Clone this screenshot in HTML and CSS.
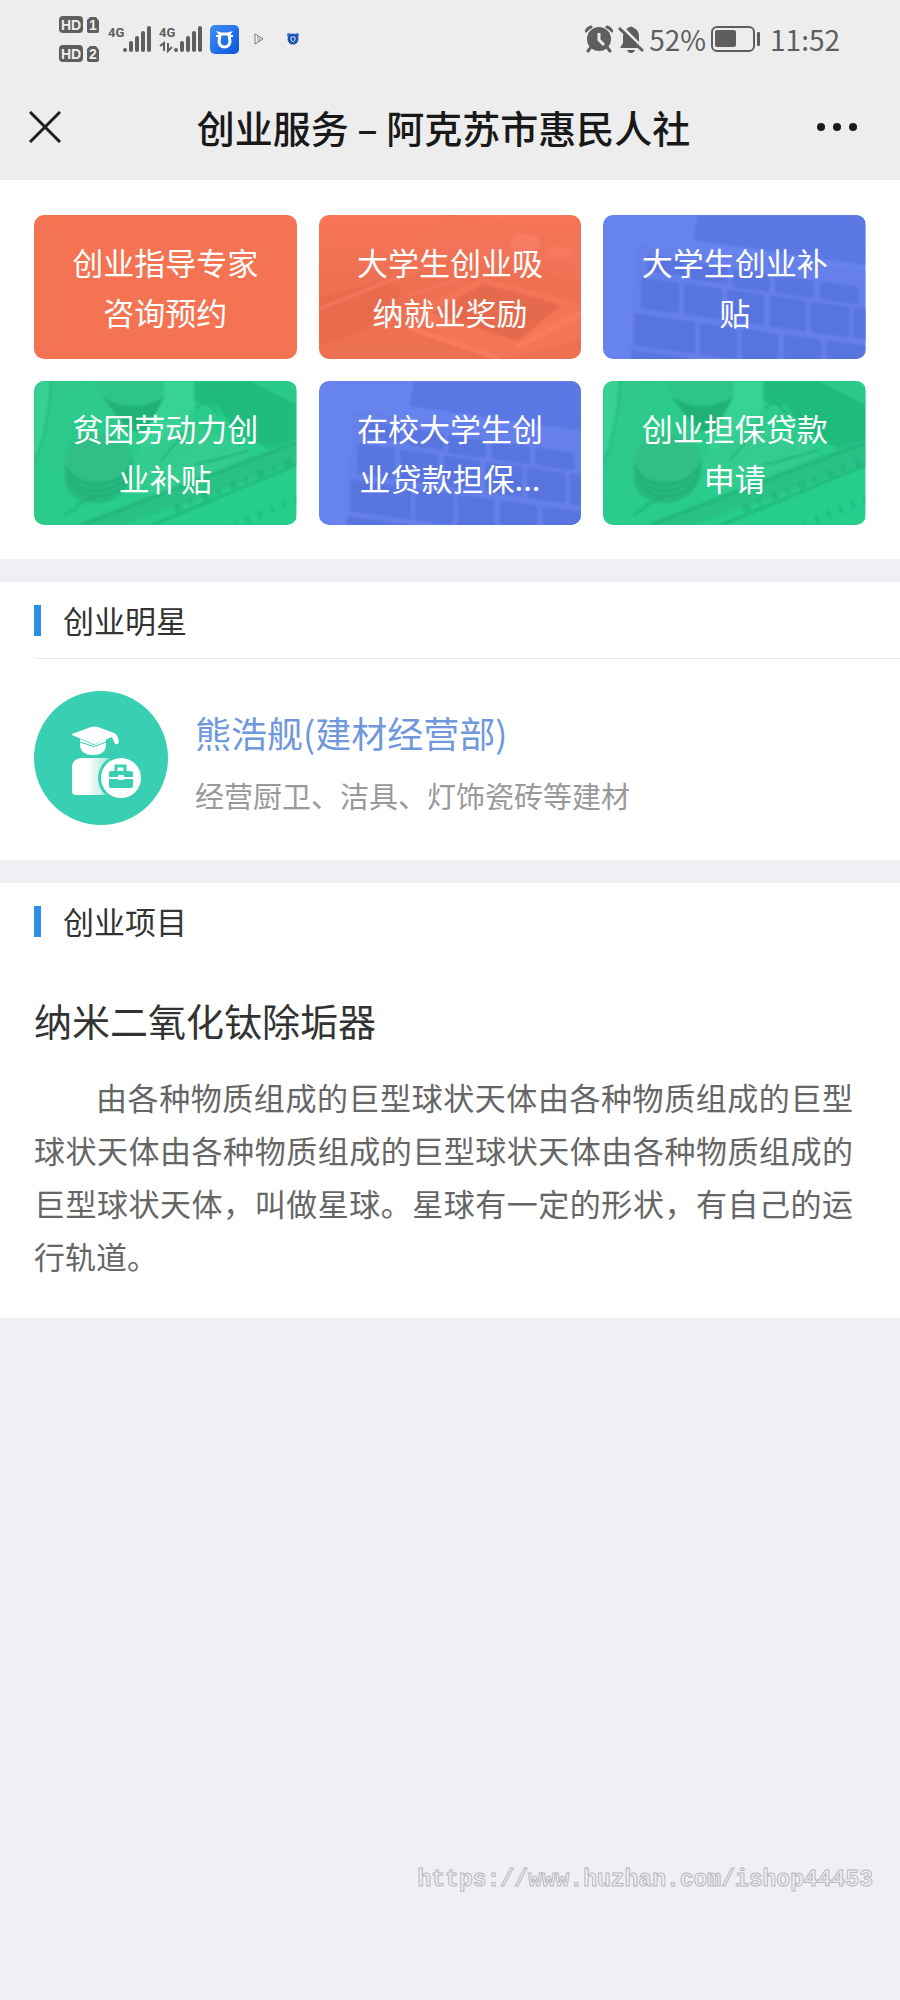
FILE: index.html
```html
<!DOCTYPE html>
<html lang="zh-CN">
<head>
<meta charset="utf-8">
<meta name="viewport" content="width=device-width, initial-scale=1">
<title>创业服务 – 阿克苏市惠民人社</title>
<link rel="stylesheet" href="styles.css">
</head>
<body>
<svg class="defs" aria-hidden="true">
  <defs>
    <linearGradient id="greenBase" x1="0" y1="0" x2="1" y2="1">
      <stop offset="0" stop-color="#2fc98a"/><stop offset="1" stop-color="#25cf8c"/>
    </linearGradient>
    <linearGradient id="orangeBase" x1="0" y1="0" x2="0" y2="1">
      <stop offset="0" stop-color="#f97557"/><stop offset="0.4" stop-color="#ee7053"/><stop offset="1" stop-color="#ec7052"/>
    </linearGradient>
    <linearGradient id="bodyShade" x1="0" y1="0" x2="1" y2="0">
      <stop offset="0.4" stop-color="#fff"/><stop offset="1" stop-color="#a3e8d8"/>
    </linearGradient>
    <linearGradient id="appBlue" x1="0" y1="0" x2="1" y2="1">
      <stop offset="0" stop-color="#3f8df5"/><stop offset="1" stop-color="#0a57dc"/>
    </linearGradient>
    <filter id="soft"><feGaussianBlur stdDeviation="1.2"/></filter>
  </defs>
  <symbol id="art-money" viewBox="0 0 262 144" preserveAspectRatio="none">
    <rect width="262" height="144" fill="url(#greenBase)"/>
    <g filter="url(#soft)" opacity="0.75">
      <path d="M0 0H17Q14 50 0 82Z" fill="#3ad395"/>
      <path d="M17 0Q14 50 0 82" fill="none" stroke="#25b97c" stroke-width="2"/>
      <path d="M131 0H160V28L130 66L108 76V30Z" fill="#3bd598"/>
      <path d="M160 0H262V58L235 68L200 50L184 26L160 20Z" fill="#1db679"/>
      <path d="M215 0H262V24Z" fill="#2cc88a"/>
      <path d="M63 0H130V18Q98 34 70 18Z" fill="#2fc486"/>
      <path d="M68 16Q98 34 130 16L112 50H96L84 36Z" fill="#1fa970"/>
      <path d="M98 78L150 40L205 62L214 74L120 118Z" fill="#38cb90"/>
      <path d="M31 82V104Q42 124 66 122Q92 118 98 92V76Z" fill="#27b27a"/>
      <ellipse cx="64" cy="77" rx="33" ry="24" fill="#35bb84"/>
      <g fill="none" stroke="#1fa36d" stroke-width="1.5">
        <path d="M31 86Q42 106 66 103Q90 100 97 82M33 93Q44 112 67 109Q90 106 97 90M36 101Q46 118 67 115Q88 112 96 97"/>
        <path d="M162 28Q170 14 184 34M126 80L150 52L160 44M160 84L214 70"/>
      </g>
      <path d="M40 144L262 58V82L90 144Z" fill="#29be83"/>
      <g fill="none" stroke="#1ea972" stroke-width="2">
        <path d="M48 144L262 62M118 144L262 84M42 124L62 116M30 134L44 126"/>
        <path d="M140 128L262 78" stroke-width="8" stroke-dasharray="7 9 3 11" opacity="0.6"/>
        <path d="M200 144L262 118" stroke-width="8" stroke-dasharray="3 10" opacity="0.6"/>
      </g>
    </g>
  </symbol>
  <symbol id="art-keys" viewBox="0 0 262 144" preserveAspectRatio="none">
    <rect width="262" height="144" fill="#6783ed"/>
    <g filter="url(#soft)">
      <path d="M95 0H262V50L90 25Z" fill="#5a77e4"/>
      <path d="M34 30L262 54V144H26Z" fill="#6680ea"/>
      <g transform="skewY(8)" fill="#5874df">
        <rect x="44" y="34" width="38" height="16" rx="3"/><rect x="88" y="35" width="36" height="17" rx="3"/><rect x="129" y="36" width="37" height="18" rx="3"/><rect x="172" y="36" width="38" height="18" rx="3"/><rect x="216" y="36" width="39" height="18" rx="3"/>
        <rect x="38" y="57" width="38" height="31" rx="3"/><rect x="81" y="57" width="38" height="31" rx="3"/><rect x="124" y="57" width="37" height="31" rx="3"/><rect x="166" y="57" width="37" height="31" rx="3"/><rect x="207" y="57" width="39" height="31" rx="3"/><rect x="250" y="57" width="20" height="31" rx="3"/>
        <rect x="31" y="94" width="61" height="32" rx="3"/><rect x="96" y="94" width="38" height="32" rx="3"/><rect x="138" y="94" width="37" height="32" rx="3"/><rect x="180" y="94" width="38" height="32" rx="3"/><rect x="223" y="94" width="40" height="32" rx="3"/>
        <rect x="28" y="131" width="62" height="20" rx="3"/>
      </g>
    </g>
  </symbol>
  <symbol id="art-desk" viewBox="0 0 262 144" preserveAspectRatio="none">
    <rect width="262" height="144" fill="url(#orangeBase)"/>
    <g filter="url(#soft)" opacity="0.75">
      <path d="M0 82L60 66L84 72L74 92L40 118L0 130Z" fill="#e66a4e"/>
      <path d="M124 0L262 22V70L180 40L100 30Z" fill="#f27558"/>
      <ellipse cx="206" cy="28" rx="15" ry="9" fill="#f9806a"/><ellipse cx="240" cy="38" rx="14" ry="7" fill="#f77b60"/>
      <path d="M92 98L162 62L262 88V124L190 144L128 128Z" fill="#f5775a"/>
      <path d="M112 98L164 69L242 90L198 126Z" fill="#e2674b"/>
      <path d="M0 94L120 46M90 80L148 62" fill="none" stroke="#f67a5e" stroke-width="3"/>
      <path d="M88 112L180 144M196 132L262 98" fill="none" stroke="#ff8062" stroke-width="5"/>
    </g>
  </symbol>
</svg>

<header class="top">
  <div class="status">
    <div class="status-group">
      <svg class="hd" width="41" height="46" viewBox="0 0 41 46" role="img" aria-label="HD 1 HD 2">
        <g fill="#5e5e5e"><rect x="0" y="0" width="24" height="17" rx="4"/><rect x="0" y="29" width="24" height="17" rx="4"/>
        <path d="M31 1h6l3 4v10a2 2 0 0 1-2 2h-8a2 2 0 0 1-2-2V4zM31 30h6l3 4v10a2 2 0 0 1-2 2h-8a2 2 0 0 1-2-2V33z"/></g>
        <g class="hd-text"><text x="12" y="14">HD</text><text x="12" y="43">HD</text><text x="34" y="14">1</text><text x="34" y="43">2</text></g>
      </svg>
      <svg width="43" height="28" viewBox="0 0 43 28" role="img" aria-label="4G">
        <text class="net" x="0" y="12">4G</text>
        <path d="M17 25v0M23 25v-7M29 25V13M35 25V8M41 25V3" stroke="#5e5e5e" stroke-width="4" stroke-linecap="round"/>
      </svg>
      <svg width="43" height="28" viewBox="0 0 43 28" role="img" aria-label="4G">
        <text class="net" x="0" y="12">4G</text>
        <path d="M17 25v0M23 25v-7M29 25V13M35 25V8M41 25V3" stroke="#5e5e5e" stroke-width="4" stroke-linecap="round"/>
        <path d="M5 26V18L1 21M9 18v8l4-4" fill="none" stroke="#5e5e5e" stroke-width="2"/>
      </svg>
      <svg width="29" height="29" viewBox="0 0 29 29" aria-hidden="true">
        <rect width="29" height="29" rx="5" fill="url(#appBlue)"/>
        <path d="M6 6l3 4 3-1-2-2M23 6l-3 4-3-1 2-2" fill="#fff"/>
        <path d="M10 9h9l1 8q-1 5-5.500 5T9 17Z" fill="none" stroke="#fff" stroke-width="3" stroke-linejoin="round"/>
        <path d="M6 11h4M19 11h4" stroke="#fff" stroke-width="2"/>
      </svg>
      <svg class="play" width="10" height="12" viewBox="0 0 10 12" aria-hidden="true">
        <path d="M1 1l8 5-8 5z" fill="#fff" stroke="#777" stroke-width="1"/><path d="M4 3v6M6 5v3" stroke="#888"/>
      </svg>
      <svg class="bear" width="12" height="12" viewBox="0 0 12 12" aria-hidden="true">
        <circle cx="2" cy="2" r="2" fill="#3c75c9"/><circle cx="10" cy="2" r="2" fill="#3c75c9"/><circle cx="6" cy="6" r="5.500" fill="#1d55b4"/>
        <path d="M4 4h4v3L6 9 4 7z" fill="none" stroke="#cfe0f8"/>
      </svg>
    </div>
    <div class="status-group status-right">
      <svg width="28" height="28" viewBox="0 0 28 28" aria-hidden="true">
        <circle cx="14" cy="14" r="12" fill="#5e5e5e"/>
        <path d="M1 6Q3 3 6 2M22 2Q25 3 27 6M6 22l-3 4M22 22l3 4" stroke="#5e5e5e" stroke-width="3" stroke-linecap="round" fill="none"/>
        <path d="M6 1L1 7M22 1L27 7" stroke="#ececec" stroke-width="2" transform="translate(0 3)" opacity="0"/>
        <path d="M14 8v7l5 5" fill="none" stroke="#ececec" stroke-width="3"/>
      </svg>
      <svg width="26" height="28" viewBox="0 0 26 28" aria-hidden="true">
        <path d="M2 23L5 18V12Q5 4 10 3Q13 0 16 3Q21 5 21 12V18L24 23ZM9 25h8q-1 3-4 3t-4-3z" fill="#5e5e5e"/>
        <path d="M2 0L26 24" stroke="#ececec" stroke-width="3"/><path d="M1 3L25 26" stroke="#5e5e5e" stroke-width="3"/>
      </svg>
      <span class="level">52%</span>
      <svg width="49" height="28" viewBox="0 0 49 28" role="img" aria-label="battery">
        <rect x="1" y="2" width="42" height="24" rx="5" fill="none" stroke="#5e5e5e" stroke-width="2"/>
        <rect x="4" y="5" width="21" height="17" rx="2" fill="#5e5e5e"/><rect x="46" y="7" width="3" height="14" rx="1" fill="#5e5e5e"/>
      </svg>
      <time class="clock">11:52</time>
    </div>
  </div>
  <nav class="bar">
    <button class="icon-button" type="button" aria-label="关闭">
      <svg width="32" height="32" viewBox="0 0 32 32"><path d="M1 1L31 31M31 1L1 31" stroke="#1f1f1f" stroke-width="3"/></svg>
    </button>
    <h1 class="bar-title">创业服务 – 阿克苏市惠民人社</h1>
    <button class="icon-button" type="button" aria-label="更多">
      <svg width="42" height="10" viewBox="0 0 42 10"><g fill="#191919"><circle cx="5" cy="5" r="4"/><circle cx="21" cy="5" r="4"/><circle cx="37" cy="5" r="4"/></g></svg>
    </button>
  </nav>
</header>

<main>
  <section class="panel services">
    <a class="card plain" href="#"><span class="card-label">创业指导专家咨询预约</span></a>
    <a class="card" href="#"><svg class="card-art" aria-hidden="true"><use href="#art-desk"/></svg><span class="card-label">大学生创业吸纳就业奖励</span></a>
    <a class="card" href="#"><svg class="card-art" aria-hidden="true"><use href="#art-keys"/></svg><span class="card-label">大学生创业补贴</span></a>
    <a class="card" href="#"><svg class="card-art" aria-hidden="true"><use href="#art-money"/></svg><span class="card-label">贫困劳动力创业补贴</span></a>
    <a class="card" href="#"><svg class="card-art" aria-hidden="true"><use href="#art-keys"/></svg><span class="card-label">在校大学生创业贷款担保...</span></a>
    <a class="card" href="#"><svg class="card-art" aria-hidden="true"><use href="#art-money"/></svg><span class="card-label">创业担保贷款申请</span></a>
  </section>

  <section class="panel">
    <h2 class="heading lined">创业明星</h2>
    <a class="star" href="#">
      <svg width="135" height="135" viewBox="0 0 135 135" aria-hidden="true">
        <circle cx="67" cy="67" r="67" fill="#38cfb3"/>
        <path d="M46 48L60 54 72 48V55Q71 64 59 64T46 55Z" fill="#fff"/>
        <path d="M38 43L57 36Q60 35 64 36L80 42Q83 43 84 47L85 51Q84 54 81 53L78 46L63 52Q60 54 57 52L38 44Z" fill="#fff"/>
        <path d="M46 51L58 55Q60 56 62 55L72 51" fill="none" stroke="#38cfb3" stroke-width="1"/>
        <path d="M46 67H76L71 104H42Q38 104 38 100V76Q38 69 46 67Z" fill="url(#bodyShade)"/>
        <circle cx="87" cy="87" r="23" fill="#38cfb3"/><circle cx="87" cy="87" r="20" fill="#fff"/>
        <path d="M82 81V75H91V81" fill="none" stroke="#38cfb3" stroke-width="3"/>
        <rect x="75" y="80" width="24" height="17" rx="2" fill="#38cfb3"/>
        <path d="M75 87H99" stroke="#fff" stroke-width="2"/><rect x="84" y="84" width="6" height="5" rx="1" fill="#fff"/>
      </svg>
      <span class="star-text"><span class="star-name">熊浩舰(建材经营部)</span><span class="star-note">经营厨卫、洁具、灯饰瓷砖等建材</span></span>
    </a>
  </section>

  <section class="panel">
    <h2 class="heading">创业项目</h2>
    <article class="project">
      <h3 class="project-title">纳米二氧化钛除垢器</h3>
      <p class="project-text">由各种物质组成的巨型球状天体由各种物质组成的巨型球状天体由各种物质组成的巨型球状天体由各种物质组成的巨型球状天体，叫做星球。星球有一定的形状，有自己的运行轨道。</p>
    </article>
  </section>
</main>
<div class="watermark">https://www.huzhan.com/ishop44453</div>
</body>
</html>
```

FILE: styles.css
```css
* { box-sizing: border-box; }

body {
  margin: 0;
  min-height: 100vh;
  position: relative;
  background: #efeff4;
  color: #333;
  font-family: "Noto Sans CJK SC", sans-serif;
}

h1, h2, h3, p { margin: 0; font-weight: 400; }
a { color: inherit; text-decoration: none; }
svg { display: block; flex: none; }
.defs { position: absolute; width: 0; height: 0; }

.top { background: #ededed; }
.status {
  display: flex;
  justify-content: space-between;
  align-items: center;
  height: 78px;
  padding: 0 60px 0 59px;
  color: #5e5e5e;
}
.status-group { display: flex; align-items: center; gap: 8px; }
.hd-text {
  fill: #ededed;
  font: 700 14px "Liberation Sans", sans-serif;
  text-anchor: middle;
}
.net { fill: #5e5e5e; font: 700 13px Roboto, sans-serif; }
.play { margin-left: 7px; }
.bear { margin-left: 15px; }
.level, .clock { font-size: 28px; line-height: 40px; }
.status-right { gap: 5px; }
.clock { margin-left: 5px; }

.bar {
  display: flex;
  justify-content: space-between;
  align-items: center;
  height: 102px;
  padding: 0 42px 4px 29px;
}
.icon-button {
  display: flex;
  min-width: 42px;
  padding: 0;
  border: 0;
  background: none;
}
.bar-title {
  color: #191919;
  font-size: 38px;
  font-weight: 500;
  line-height: 56px;
}

.panel { background: #fff; }
.panel + .panel { margin-top: 23px; }

.services {
  display: grid;
  grid-template-columns: repeat(3, 1fr);
  gap: 22px;
  padding: 35px 34px 34px;
}
.card {
  position: relative;
  display: flex;
  align-items: center;
  justify-content: center;
  min-height: 144px;
  padding: 20px 34px;
  overflow: hidden;
  border-radius: 10px;
  color: #fff;
  font-size: 31px;
  line-height: 50px;
  text-align: center;
}
.plain { background: #f47352; }
.card-art { position: absolute; inset: 0; width: 100%; height: 100%; }
.card-label { position: relative; }

.heading {
  display: flex;
  align-items: center;
  gap: 22px;
  margin-left: 34px;
  padding: 15px 0;
  font-size: 31px;
  line-height: 46px;
}
.heading::before { content: ""; width: 7px; height: 31px; background: #2b8fe3; }
.lined { border-bottom: 1px solid #e8e8e8; }

.star { display: flex; align-items: center; gap: 26px; padding: 32px 34px 34px; }
.star-text { display: flex; flex-direction: column; gap: 12px; padding-top: 6px; }
.star-name { color: #7098dc; font-size: 36px; line-height: 54px; }
.star-note { color: #999; font-size: 29px; line-height: 48px; }

.project { padding: 33px 34px 36px; }
.project-title { margin-bottom: 22px; font-size: 38px; line-height: 56px; }
.project-text {
  padding-right: 13px;
  color: #666;
  font-size: 31px;
  line-height: 53px;
  text-align: justify;
  text-indent: 2em;
}

.watermark {
  position: absolute;
  right: 27px;
  bottom: 106px;
  color: transparent;
  font: 700 23px/28px "Liberation Mono", monospace;
  -webkit-text-stroke: 1px #b9b9bc;
}
```
